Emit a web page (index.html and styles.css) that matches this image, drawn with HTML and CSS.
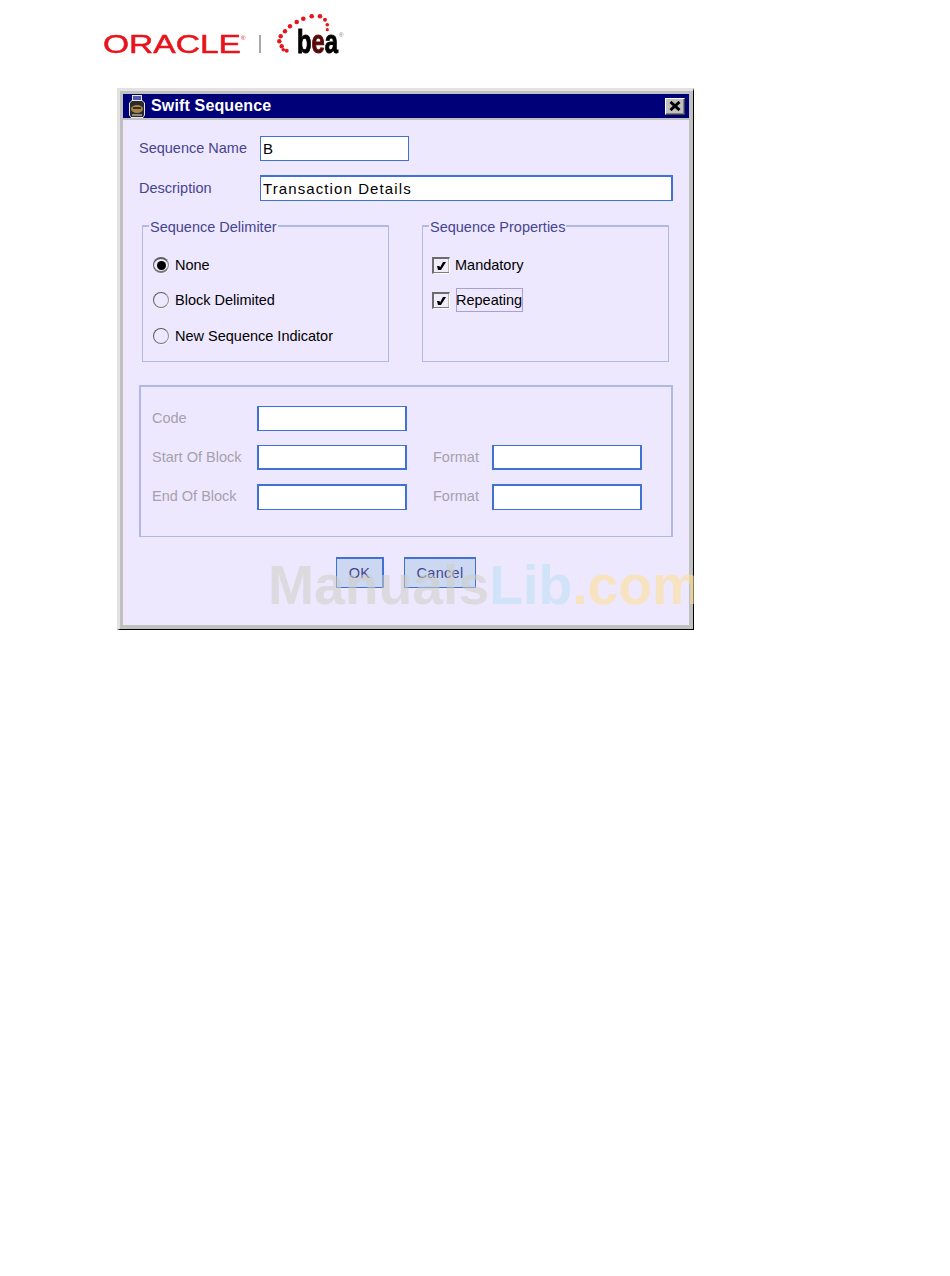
FILE: index.html
```html
<!DOCTYPE html>
<html lang="en">
<head>
<meta charset="utf-8">
<title>Swift Sequence</title>
<link rel="stylesheet" href="styles.css">
</head>
<body>
<header class="logo-bar">
  <svg class="logo" width="250" height="88" viewBox="100 0 250 88" aria-label="Oracle BEA">
    <text class="logo-oracle" x="103" y="53" textLength="138" lengthAdjust="spacingAndGlyphs">ORACLE</text>
    <text class="logo-reg" x="241" y="40">®</text>
    <rect x="259" y="35" width="2" height="18" fill="#a8a8a8"/>
    <g fill="#e8141c">
      <circle cx="286.700" cy="50.700" r="2"/><circle cx="283.300" cy="49.700" r="1.800"/><circle cx="281.700" cy="46.300" r="2.200"/>
      <circle cx="279.300" cy="41.300" r="2.200"/><circle cx="280.700" cy="36.300" r="2.200"/><circle cx="285" cy="31.300" r="2.200"/>
      <circle cx="290" cy="26.300" r="2.200"/><circle cx="296.700" cy="22" r="2.300"/><circle cx="303.300" cy="18.700" r="2.300"/>
      <circle cx="311.700" cy="16.300" r="2.300"/><circle cx="320" cy="16.300" r="2.300"/><circle cx="325" cy="19.700" r="2"/>
      <circle cx="327.300" cy="24.700" r="1.800"/><circle cx="327.300" cy="29.700" r="1.600"/>
    </g>
    <text class="logo-bea" x="297" y="53" textLength="41" lengthAdjust="spacingAndGlyphs">b<tspan class="logo-e">e</tspan>a</text>
    <text class="logo-reg logo-reg-dark" x="339" y="37">®</text>
  </svg>
</header>

<section class="dialog">
  <div class="titlebar">
    <svg class="title-icon" width="18" height="23" viewBox="0 0 18 23">
      <path d="M4 0h10v5l3 3v12l-2 3H3l-2-3V8l3-3z" fill="#e8e8e8"/>
      <rect x="5" y="1" width="8" height="4" fill="#5656a8"/>
      <path d="M4 6h10l2 2v12l-1 2H3l-1-2V8z" fill="#2a2a2a"/>
      <ellipse cx="9" cy="14" rx="6" ry="4" fill="#a88448"/>
      <rect x="5" y="12" width="8" height="2" fill="#3a3020"/>
      <rect x="4" y="19" width="10" height="2" fill="#8a8a8a"/>
    </svg>
    <span class="title-text">Swift Sequence</span>
    <button class="close-btn" type="button" aria-label="Close">
      <svg width="12" height="10" viewBox="0 0 12 10"><path d="M1.500 1L10.500 9M10.500 1L1.500 9" stroke="#000" stroke-width="3" fill="none"/></svg>
    </button>
  </div>

  <div class="content">
    <div class="field-row field-row-name">
      <label class="label">Sequence Name</label>
      <input class="input input-name" type="text" value="B">
    </div>
    <div class="field-row field-row-desc">
      <label class="label">Description</label>
      <input class="input input-desc" type="text" value="Transaction Details">
    </div>

    <div class="groups">
      <fieldset class="group">
        <legend class="legend">Sequence Delimiter</legend>
        <div class="option"><span class="radio radio-on"></span><span>None</span></div>
        <div class="option"><span class="radio"></span><span>Block Delimited</span></div>
        <div class="option option-last"><span class="radio"></span><span>New Sequence Indicator</span></div>
      </fieldset>
      <fieldset class="group group-props">
        <legend class="legend">Sequence Properties</legend>
        <div class="option"><span class="check">
          <svg width="9" height="8" viewBox="0 0 9 8"><path d="M6 0h3L4 8H1L0 4h2.500l.5 1.500z" fill="#000"/></svg>
        </span><span>Mandatory</span></div>
        <div class="option"><span class="check">
          <svg width="9" height="8" viewBox="0 0 9 8"><path d="M6 0h3L4 8H1L0 4h2.500l.5 1.500z" fill="#000"/></svg>
        </span><span class="focused">Repeating</span></div>
      </fieldset>
    </div>

    <div class="block">
      <span class="label-off">Code</span>
      <input class="input" type="text">
      <span class="grid-fill"></span>
      <span class="label-off">Start Of Block</span>
      <input class="input input-bottom" type="text">
      <span class="label-off label-format">Format</span>
      <input class="input input-bottom" type="text">
      <span class="label-off">End Of Block</span>
      <input class="input input-top" type="text">
      <span class="label-off label-format">Format</span>
      <input class="input input-top" type="text">
    </div>

    <div class="actions">
      <button class="btn btn-ok" type="button">OK</button>
      <button class="btn btn-cancel" type="button">Cancel</button>
    </div>
  </div>

  <div class="watermark"><span class="wm-gray">Manuals</span><span class="wm-blue">Lib</span><span class="wm-orange">.com</span></div>
</section>
</body>
</html>
```
FILE: styles.css
```css
html, body { margin: 0; padding: 0; background: #fff; }
body { font-family: "Liberation Sans", Arial, sans-serif; font-size: 14.5px; color: #000; }

.logo-bar { height: 88px; padding-left: 100px; }
.logo { display: block; filter: blur(0.4px); }
.logo-oracle { font: 25px "Liberation Sans", sans-serif; fill: #e8141c; stroke: #e8141c; stroke-width: 0.5; }
.logo-reg { font: 6px "Liberation Sans", sans-serif; fill: #e8141c; }
.logo-reg-dark { fill: #777; }
.logo-bea { font: bold 34px "Liberation Sans", sans-serif; fill: #000; stroke: #000; stroke-width: 1; }
.logo-e { fill: #5a0808; stroke: #5a0808; }

.dialog {
  position: relative;
  box-sizing: border-box;
  margin-left: 117px;
  width: 577px;
  height: 542px;
  padding: 3px 4px 4px 3px;
  background: #c0c0c0;
  border-top: 3px solid #e2e2e2;
  border-left: 3px solid #e2e2e2;
  border-right: 1px solid #000;
  border-bottom: 1px solid #000;
}

.titlebar {
  display: flex;
  align-items: center;
  height: 24px;
  background: #000078;
  padding: 0 4px 0 5px;
}
.title-icon { display: block; flex: none; }
.title-text { margin-left: 5px; color: #fff; font-weight: bold; font-size: 16px; letter-spacing: 0.15px; }
.close-btn {
  margin-left: auto;
  box-sizing: border-box;
  display: flex;
  align-items: center;
  justify-content: center;
  width: 20px;
  height: 17px;
  padding: 0;
  background: #c0c0c0;
  border: 1px solid;
  border-color: #fff #404040 #404040 #fff;
  box-shadow: inset -1px -1px 0 #808080;
}

.content {
  box-sizing: border-box;
  height: 505px;
  margin-top: 2px;
  padding: 16px 0 0 16px;
  background: #eee8fe;
}

.field-row { display: flex; align-items: center; height: 25px; }
.field-row-name .label { padding-bottom: 2px; }
.field-row-desc { height: 26px; margin-top: 14px; }
.label { width: 121px; flex: none; color: #45458f; }

.input {
  box-sizing: border-box;
  display: block;
  width: 150px;
  height: 100%;
  margin: 0;
  padding: 0 2px;
  background: #fff;
  border: 1px solid #3f72d4;
  border-width: 1px 2px;
  font: 15px "Liberation Sans", sans-serif;
  letter-spacing: 1.1px;
  color: #000;
  outline: none;
}
.input-name { width: 149px; border-width: 1px; }
.input-desc { width: 413px; border-width: 2px 2px 1px 1px; }
.input-top { border-top-width: 2px; }
.input-bottom { border-bottom-width: 2px; }

.groups { display: flex; gap: 33px; margin: 16px 0 0 3px; }
.group {
  box-sizing: border-box;
  width: 247px;
  height: 145px;
  min-width: 0;
  margin: 0;
  padding: 20px 0 0 10px;
  border: 1px solid #b2b8e4;
  border-top-width: 2px;
  display: flex;
  flex-direction: column;
  gap: 15px;
}
.group-props { padding-left: 9px; }
.legend {
  margin-left: -4px;
  padding: 2px 1px 0;
  line-height: 16px;
  color: #45458f;
}
.group-props .legend { margin-left: -3px; }

.option { display: flex; align-items: center; height: 20px; }
.option-last { margin-top: 1px; }
.radio {
  box-sizing: border-box;
  flex: none;
  display: flex;
  align-items: center;
  justify-content: center;
  width: 16px;
  height: 16px;
  margin-right: 6px;
  border-radius: 50%;
  background: #eee8fe;
  border: 1px solid;
  border-color: #5c5c5c #8c8c8c #777 #5c5c5c;
  box-shadow: 0.5px 0.5px 0 #fff;
}
.radio-on { border-width: 2px 1px; }
.radio-on::after {
  content: "";
  width: 9px;
  height: 9px;
  border-radius: 50%;
  background: #000;
}
.check {
  box-sizing: border-box;
  flex: none;
  display: flex;
  align-items: center;
  justify-content: center;
  width: 18px;
  height: 17px;
  margin-right: 5px;
  background: #f0ecfa;
  border: 2px solid;
  border-color: #6c6c6c #fff #fff #6c6c6c;
  border-bottom-width: 1px;
  border-right-width: 1px;
  box-shadow: inset 0 -1px 0 #7c7c7c, inset -1px 0 0 #b8b8b8;
}
.focused {
  box-sizing: border-box;
  display: block;
  margin-left: 1px;
  width: 67px;
  height: 24px;
  line-height: 22px;
  text-indent: -1px;
  border: 1px solid #a5a0d8;
  flex: none;
}

.block {
  box-sizing: border-box;
  display: grid;
  grid-template-columns: 105px 150px 26px 59px 150px;
  grid-template-rows: 25px 25px 26px;
  row-gap: 14px;
  align-items: center;
  width: 534px;
  height: 152px;
  margin-top: 23px;
  padding: 19px 0 0 11px;
  border: 1px solid #b2b8e4;
  border-width: 2px 2px 1px 2px;
}
.block .input { height: 100%; }
.grid-fill { grid-column: 3 / 6; }
.label-off { color: #a5a1ad; padding-bottom: 2px; }
.label-format { grid-column: 4; }

.actions { display: flex; justify-content: center; gap: 20px; margin-top: 20px; padding-right: 16px; }
.btn {
  box-sizing: border-box;
  height: 31px;
  padding: 0;
  background: #ccd8f2;
  border: 1px solid #3f72d4;
  border-top-width: 2px;
  border-left-width: 1px;
  border-right-width: 2px;
  font: 14.5px "Liberation Sans", sans-serif;
  letter-spacing: 0.3px;
  color: #45458f;
}
.btn-ok { width: 48px; }
.btn-cancel { width: 72px; border-right-width: 1px; }

.watermark {
  position: absolute;
  left: 148px;
  top: 459px;
  width: 426px;
  overflow: hidden;
  font-weight: bold;
  font-size: 55.3px;
  line-height: 70px;
  white-space: nowrap;
}
.wm-gray { color: rgba(205, 206, 194, 0.55); }
.wm-blue { color: rgba(184, 222, 243, 0.55); }
.wm-orange { color: rgba(255, 222, 141, 0.55); }
```
